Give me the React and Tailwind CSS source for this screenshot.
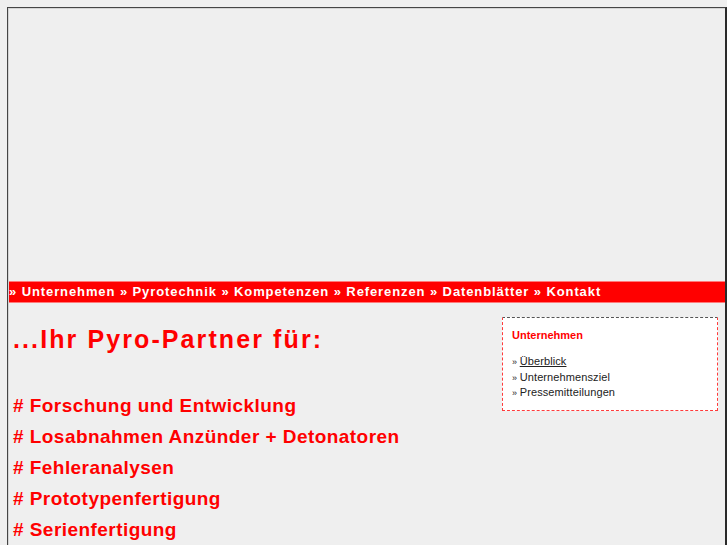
export default function App() {
  const nav = ['Unternehmen', 'Pyrotechnik', 'Kompetenzen', 'Referenzen', 'Datenblätter', 'Kontakt'];
  const items = [
    'Forschung und Entwicklung',
    'Losabnahmen Anzünder + Detonatoren',
    'Fehleranalysen',
    'Prototypenfertigung',
    'Serienfertigung',
  ];
  const sub = ['Überblick', 'Unternehmensziel', 'Pressemitteilungen'];

  return (
    <div className="min-h-screen bg-[#efefef] pl-[7px] pt-[7px] font-['Liberation_Sans',Arial,sans-serif]">
      <div className="border-l border-t border-r-2 border-[#454545] border-r-[#2a2a2a] h-[538px] overflow-hidden">
        <div className="border-l border-t border-[#d4d4d4] h-full">
          {/* Header */}
          <div className="h-[272px]" />

          {/* Navigation */}
          <div className="flex h-[22px] items-center border-y border-[#ff7a7a] bg-[#ff0000] text-[13px] font-bold tracking-[0.9px] text-white">
            {nav.map((n, i) => (
              <span key={n} className="whitespace-pre">
                {'» '}
                {n}
                {i < nav.length - 1 ? ' ' : ''}
              </span>
            ))}
          </div>

          {/* Content */}
          <div className="flex">
            <div className="flex-1 pl-[4px]">
              <h1 className="mt-[22px] text-[25px] font-bold leading-[28px] tracking-[2.1px] text-[#ff0000]">
                ...Ihr Pyro-Partner für:
              </h1>
              <div className="mt-[37px] flex flex-col">
                {items.map((t) => (
                  <div key={t} className="h-[31px] text-[19px] font-bold leading-[31px] tracking-[0.45px] text-[#ff0000]">
                    # {t}
                  </div>
                ))}
              </div>
            </div>

            <div className="mr-[7px] mt-[14px] h-[94px] w-[216px] border border-dashed border-[#ff3b3b] border-t-[#555] bg-white px-[9px] pt-[10px] text-[11px]">
              <div className="font-bold leading-[15px] text-[#ff0000]">Unternehmen</div>
              <div className="mt-[11px] text-[#222]">
                {sub.map((s, i) => (
                  <div key={s} className="h-[15.5px] leading-[15.5px] tracking-[0.1px]">
                    <span className="text-[9px]">» </span>
                    <span className={i === 0 ? 'underline' : ''}>{s}{i === 0 ? ' ' : ''}</span>
                  </div>
                ))}
              </div>
            </div>
          </div>
        </div>
      </div>
    </div>
  );
}
